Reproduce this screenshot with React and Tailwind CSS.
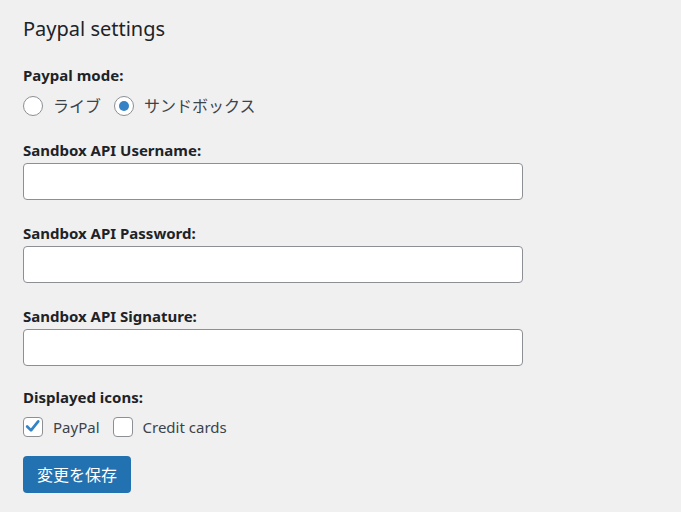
import { useState } from 'react';

const font = { fontFamily: '"Noto Sans", "Noto Sans CJK JP", sans-serif' };

function Radio({ checked, label, onChange }) {
  return (
    <label className="flex items-center cursor-pointer" onClick={onChange}>
      <span className="w-[20px] h-[20px] rounded-full border border-[#8c8f94] bg-white flex items-center justify-center">
        {checked && <span className="w-[10px] h-[10px] rounded-full bg-[#3582c4]" />}
      </span>
      <span className="ml-[10px] text-[16px] text-[#3c434a] leading-[22px]">{label}</span>
    </label>
  );
}

function Checkbox({ checked, label, onChange }) {
  return (
    <label className="flex items-center cursor-pointer" onClick={onChange}>
      <span className="w-[20px] h-[20px] rounded-[4px] border border-[#8c8f94] bg-white flex items-center justify-center">
        {checked && (
          <svg viewBox="0 0 20 20" className="w-[20px] h-[20px]">
            <polyline
              points="3.5,9.5 7.8,13.8 15.8,3.8"
              fill="none"
              stroke="#3582c4"
              strokeWidth="3"
              strokeLinecap="round"
              strokeLinejoin="round"
            />
          </svg>
        )}
      </span>
      <span className="ml-[10px] text-[15px] text-[#3c434a] leading-[22px]">{label}</span>
    </label>
  );
}

function Field({ label }) {
  return (
    <div className="mt-[23px]">
      <div className="text-[15px] leading-[20px] font-bold text-[#1d2327]">{label}</div>
      <input
        type="text"
        className="mt-[3px] block w-[500px] h-[37px] rounded-[4px] border border-[#8c8f94] bg-white px-2 outline-none"
      />
    </div>
  );
}

export default function App() {
  const [mode, setMode] = useState('sandbox');
  const [icons, setIcons] = useState({ paypal: true, cards: false });

  return (
    <div className="min-h-screen bg-[#f0f0f1] px-[23px] pt-[15px]" style={font}>
      <h2 className="text-[20px] leading-[28px] text-[#1d2327]">Paypal settings</h2>

      <div className="mt-[22px] text-[15px] leading-[20px] font-bold text-[#1d2327]">Paypal mode:</div>
      <div className="mt-[10px] flex items-center gap-[13px] h-[22px]">
        <Radio checked={mode === 'live'} label="ライブ" onChange={() => setMode('live')} />
        <Radio checked={mode === 'sandbox'} label="サンドボックス" onChange={() => setMode('sandbox')} />
      </div>

      <Field label="Sandbox API Username:" />
      <Field label="Sandbox API Password:" />
      <Field label="Sandbox API Signature:" />

      <div className="mt-[21px] text-[15px] leading-[20px] font-bold text-[#1d2327]">Displayed icons:</div>
      <div className="mt-[9px] flex items-center gap-[13px] h-[22px]">
        <Checkbox
          checked={icons.paypal}
          label="PayPal"
          onChange={() => setIcons({ ...icons, paypal: !icons.paypal })}
        />
        <Checkbox
          checked={icons.cards}
          label="Credit cards"
          onChange={() => setIcons({ ...icons, cards: !icons.cards })}
        />
      </div>

      <button className="mt-[18px] w-[108px] h-[37px] rounded-[4px] bg-[#2271b1] text-white text-[16px]">
        変更を保存
      </button>
    </div>
  );
}
